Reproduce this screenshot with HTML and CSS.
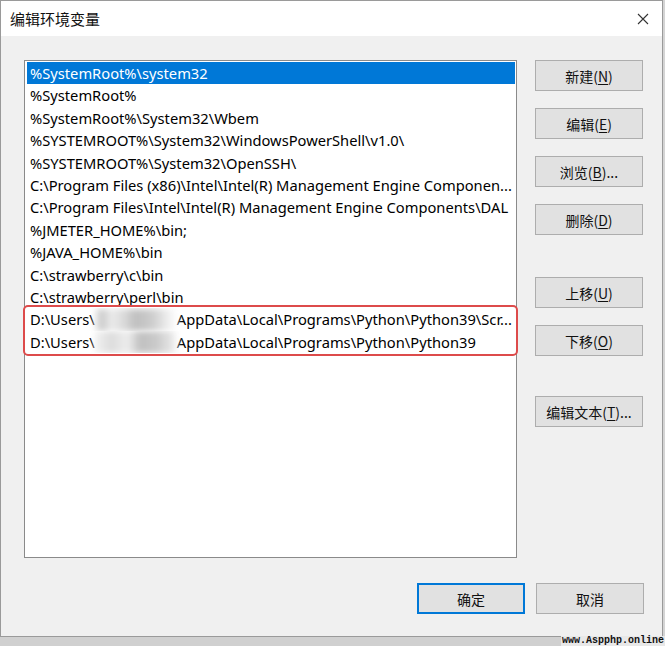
FILE: index.html
```html
<!DOCTYPE html>
<html lang="zh-CN">
<head>
<meta charset="utf-8">
<title>编辑环境变量</title>
<link rel="stylesheet" href="styles.css">
</head>
<body>
<div class="window">
  <div class="titlebar">
    <span class="title">编辑环境变量</span>
    <svg class="close" width="12" height="12" viewBox="0 0 12 12"><path d="M1 1 L11 11 M11 1 L1 11" stroke="#333" stroke-width="1.1" fill="none"/></svg>
  </div>
  <div class="content">
    <div class="main">
      <div class="list">
        <div class="row selected">%SystemRoot%\system32</div>
        <div class="row">%SystemRoot%</div>
        <div class="row">%SystemRoot%\System32\Wbem</div>
        <div class="row">%SYSTEMROOT%\System32\WindowsPowerShell\v1.0\</div>
        <div class="row">%SYSTEMROOT%\System32\OpenSSH\</div>
        <div class="row">C:\Program Files (x86)\Intel\Intel(R) Management Engine Componen...</div>
        <div class="row">C:\Program Files\Intel\Intel(R) Management Engine Components\DAL</div>
        <div class="row">%JMETER_HOME%\bin;</div>
        <div class="row">%JAVA_HOME%\bin</div>
        <div class="row">C:\strawberry\c\bin</div>
        <div class="row">C:\strawberry\perl\bin</div>
        <div class="highlight">
          <div class="row">D:\Users\<span class="mask mask-a"></span>AppData\Local\Programs\Python\Python39\Scr...</div>
          <div class="row">D:\Users\<span class="mask mask-b"></span>AppData\Local\Programs\Python\Python39</div>
        </div>
      </div>
      <div class="side">
        <button class="btn">新建(<u>N</u>)</button>
        <button class="btn">编辑(<u>E</u>)</button>
        <button class="btn">浏览(<u>B</u>)...</button>
        <button class="btn">删除(<u>D</u>)</button>
        <button class="btn gap-a">上移(<u>U</u>)</button>
        <button class="btn">下移(<u>O</u>)</button>
        <button class="btn gap-b">编辑文本(<u>T</u>)...</button>
      </div>
    </div>
    <div class="footer">
      <button class="btn focused">确定</button>
      <button class="btn">取消</button>
    </div>
  </div>
</div>
<div class="strip">
  <span class="watermark">www.Aspphp.online</span>
</div>
</body>
</html>
```

FILE: styles.css
```css
html, body {
  margin: 0;
  padding: 0;
}
body {
  width: 665px;
  height: 646px;
  background: #d4d4d4;
  font-family: "Noto Sans", "Noto Sans CJK SC", sans-serif;
  overflow: hidden;
}
.window {
  width: 661px;
  height: 635px;
  border: 1px solid #9a9a9a;
  background: #f0f0f0;
  display: flex;
  flex-direction: column;
}
.titlebar {
  height: 35px;
  background: #ffffff;
  display: flex;
  align-items: center;
  justify-content: space-between;
  padding: 0 13px 0 9px;
}
.title {
  font-family: "Noto Sans CJK SC", sans-serif;
  font-size: 15px;
  color: #111;
}
.close {
  display: block;
}
.content {
  flex: 1;
  padding: 24px 18px 0 23px;
  display: flex;
  flex-direction: column;
}
.main {
  display: flex;
  gap: 18px;
}
.list {
  width: 488px;
  height: 494px;
  border: 1px solid #8a8a8a;
  background: #ffffff;
  padding: 1px 1px 1px 2px;
}
.row {
  height: 22.4px;
  line-height: 22.4px;
  padding-left: 3px;
  font-size: 14.7px;
  color: #000;
  white-space: nowrap;
  overflow: hidden;
}
.row.selected {
  background: #0078d7;
  color: #fff;
}
.highlight {
  outline: 2px solid #dd4b4b;
  outline-offset: 1px;
  margin-left: -1px;
  border-radius: 2px;
  padding-left: 1px;
}
.mask {
  display: inline-block;
  vertical-align: middle;
  height: 22px;
  filter: blur(3px);
  margin-top: -3px;
}
.mask-a {
  width: 82px;
  background: linear-gradient(90deg, #eeeeee 0, #c8c8c8 8%, #ececec 20%, #dadada 35%, #bfbfbf 50%, #cdcdcd 70%, #f0f0f0 90%, #fff 100%);
}
.mask-b {
  width: 82px;
  background: linear-gradient(90deg, #f2f2f2 0, #dcdcdc 20%, #eeeeee 40%, #c0c0c0 55%, #cacaca 75%, #e8e8e8 95%, #fff 100%);
}
.side {
  display: flex;
  flex-direction: column;
  gap: 17px;
}
.btn {
  width: 108px;
  height: 31px;
  background: #e1e1e1;
  border: 1px solid #adadad;
  border-radius: 0;
  font-family: "Noto Sans CJK SC", sans-serif;
  font-size: 14px;
  color: #111;
  padding: 0;
  margin: 0;
}
.btn u {
  text-decoration: underline;
  text-underline-offset: 2px;
}
.btn.gap-a {
  margin-top: 25px;
}
.btn.gap-b {
  margin-top: 23px;
}
.btn.focused {
  border: 1px solid #0078d7;
  box-shadow: inset 0 0 0 1px #0078d7;
}
.footer {
  display: flex;
  justify-content: flex-end;
  gap: 11px;
  margin-top: 25px;
}
.strip {
  height: 9px;
  position: relative;
  background: #d0d0d0;
}
.watermark {
  position: absolute;
  right: 0;
  bottom: 0;
  font-family: "Liberation Mono", monospace;
  font-weight: bold;
  font-size: 10px;
  line-height: 10px;
  color: #111;
  background: #e8e8e8;
  padding: 0 1px;
}
```
